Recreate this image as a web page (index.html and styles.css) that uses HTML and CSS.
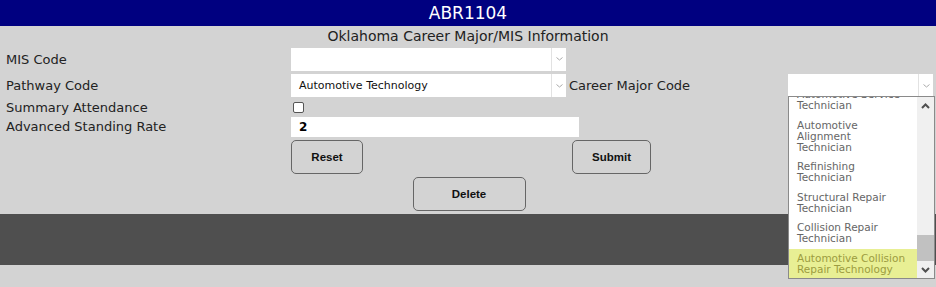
FILE: index.html
```html
<!DOCTYPE html>
<html lang="en">
<head>
    <meta charset="UTF-8">
    <meta name="viewport" content="width=device-width, initial-scale=1.0">
    <title>ABR1104</title>
    <link rel="stylesheet" href="styles.css">
</head>
<body>
    <div id="header">ABR1104</div>
    <div id="title">Oklahoma Career Major/MIS Information</div>

    <div id="form">
        <div class="row row-mis">
            <label class="label">MIS Code</label>
            <div class="combo combo-wide">
                <span class="combo-value"></span>
                <span class="combo-arrow"><svg width="7" height="4" viewBox="0 0 7 4"><path d="M0.5 0.5 L3.5 3 L6.5 0.5" fill="none" stroke="#aaa" stroke-width="1"/></svg></span>
            </div>
        </div>

        <div class="row row-pathway">
            <label class="label">Pathway Code</label>
            <div class="combo combo-wide">
                <span class="combo-value">Automotive Technology</span>
                <span class="combo-arrow"><svg width="7" height="4" viewBox="0 0 7 4"><path d="M0.5 0.5 L3.5 3 L6.5 0.5" fill="none" stroke="#aaa" stroke-width="1"/></svg></span>
            </div>
            <label class="label label-career">Career Major Code</label>
            <div class="combo combo-career">
                <span class="combo-value"></span>
                <span class="combo-arrow"><svg width="7" height="4" viewBox="0 0 7 4"><path d="M0.5 0.5 L3.5 3 L6.5 0.5" fill="none" stroke="#aaa" stroke-width="1"/></svg></span>
            </div>
        </div>

        <div class="row row-check">
            <label class="label">Summary Attendance</label>
            <span class="checkbox"></span>
        </div>

        <div class="row row-rate">
            <label class="label">Advanced Standing Rate</label>
            <div class="text-input">2</div>
        </div>

        <div class="row row-buttons">
            <button class="btn btn-reset">Reset</button>
            <button class="btn btn-submit">Submit</button>
        </div>

        <div class="row row-delete">
            <button class="btn btn-delete">Delete</button>
        </div>
    </div>

    <div id="footer-bar"></div>

    <!-- open list of the Career Major Code select -->
    <div id="dropdown">
        <div class="dropdown-list">
            <div class="dropdown-items">
                <div class="item">Automotive Service<br>Technician</div>
                <div class="item">Automotive<br>Alignment<br>Technician</div>
                <div class="item">Refinishing<br>Technician</div>
                <div class="item">Structural Repair<br>Technician</div>
                <div class="item">Collision Repair<br>Technician</div>
                <div class="item selected">Automotive Collision<br>Repair Technology</div>
            </div>
        </div>
        <div class="scrollbar">
            <span class="scroll-btn"><svg width="9" height="6" viewBox="0 0 9 6"><path d="M1 5 L4.5 1.5 L8 5" fill="none" stroke="#505050" stroke-width="2"/></svg></span>
            <span class="scroll-track"><span class="scroll-thumb"></span></span>
            <span class="scroll-btn"><svg width="9" height="6" viewBox="0 0 9 6"><path d="M1 1 L4.5 4.5 L8 1" fill="none" stroke="#505050" stroke-width="2"/></svg></span>
        </div>
    </div>
</body>
</html>
```

FILE: styles.css
```css
body {
    font-family: "DejaVu Sans", Verdana, sans-serif;
    font-size: 13px;
    color: #222;
    background-color: #d3d3d3;
    margin: 0;
    padding: 0;
    position: relative;
    min-height: 287px;
}

#header {
    background-color: #000080;
    color: #fff;
    height: 26px;
    line-height: 27px;
    font-size: 17px;
    text-align: center;
}

#title {
    height: 20px;
    line-height: 21px;
    font-size: 14px;
    text-align: center;
}

#form {
    padding-left: 6px;
}

.row {
    display: flex;
    align-items: center;
}

.label {
    width: 285px;
    flex-shrink: 0;
}

.row-mis {
    height: 24px;
    margin-top: 1px;
}

.row-pathway {
    height: 23px;
    margin-top: 3px;
}

.row-check {
    height: 16px;
    margin-top: 2px;
}

.row-rate {
    height: 21px;
    margin-top: 1px;
}

.combo {
    display: flex;
    background-color: #fff;
    height: 100%;
}

.combo-wide {
    width: 275px;
    height: 23px;
}

.combo-value {
    flex: 1;
    padding-left: 8px;
    font-size: 11px;
    line-height: 23px;
    color: #111;
}

.combo-arrow {
    width: 14px;
    border-left: 1px solid #e2e2e2;
    display: flex;
    align-items: center;
    justify-content: center;
}

.label-career {
    width: auto;
    margin-left: 3px;
}

.combo-career {
    width: 145px;
    height: 23px;
    margin-left: auto;
    margin-right: 3px;
}

.checkbox {
    width: 9px;
    height: 9px;
    border: 1px solid #555;
    border-radius: 2px;
    background-color: #fff;
    margin-left: 2px;
}

.text-input {
    width: 280px;
    height: 20px;
    line-height: 20px;
    background-color: #fff;
    padding-left: 8px;
    font-size: 12px;
    font-weight: bold;
    color: #000;
}

.btn {
    font-family: "Liberation Sans", Arial, sans-serif;
    font-size: 11.5px;
    font-weight: bold;
    color: #111;
    background-color: #d3d3d3;
    border: 1px solid #666;
    border-radius: 5px;
    height: 34px;
    padding: 0;
    cursor: pointer;
}

.row-buttons {
    margin-top: 3px;
    padding-left: 285px;
}

.btn-reset {
    width: 72px;
}

.btn-submit {
    width: 79px;
    margin-left: 209px;
}

.row-delete {
    margin-top: 3px;
    justify-content: center;
    padding-right: 6px;
}

.btn-delete {
    width: 113px;
    margin-left: 2px;
}

#footer-bar {
    background-color: #4f4f4f;
    height: 51px;
    margin-top: 3px;
}

/* open list of the career major select, drawn over the page */
#dropdown {
    position: absolute;
    left: 788px;
    top: 96px;
    width: 145px;
    height: 181px;
    border: 1px solid #8a8a8a;
    background-color: #fff;
    display: flex;
}

.dropdown-list {
    flex: 1;
    overflow: hidden;
    position: relative;
}

.dropdown-items {
    margin-top: -12px;
}

.item {
    font-size: 10.5px;
    line-height: 11px;
    color: #666;
    padding: 4px 0 4.5px 8px;
}

.item.selected {
    background-color: #e8ef94;
    color: #9c9c40;
}

.scrollbar {
    width: 17px;
    background-color: #f0f0f0;
    display: flex;
    flex-direction: column;
}

.scroll-btn {
    height: 17px;
    display: flex;
    align-items: center;
    justify-content: center;
}

.scroll-track {
    flex: 1;
    position: relative;
}

.scroll-thumb {
    position: absolute;
    left: 0;
    right: 0;
    bottom: 0;
    height: 26px;
    background-color: #c1c1c1;
}
```
